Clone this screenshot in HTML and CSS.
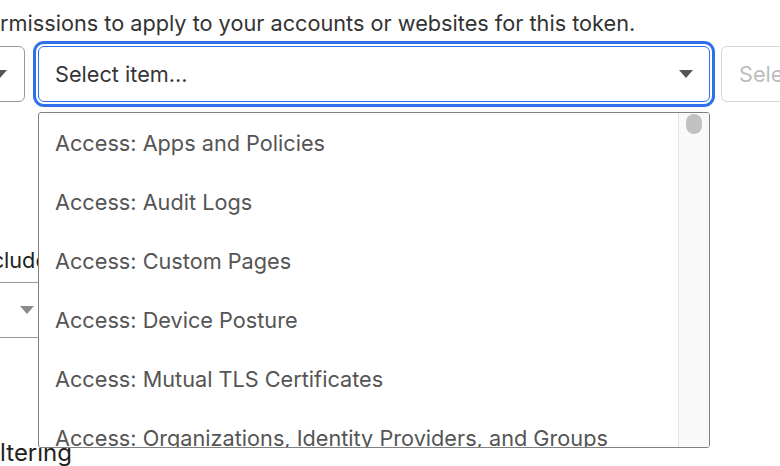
FILE: index.html
```html
<!DOCTYPE html>
<html lang="en">
<head>
<meta charset="utf-8">
<title>Permissions</title>
<link rel="stylesheet" href="styles.css">
</head>
<body>
<div class="page">
  <p class="desc">rmissions to apply to your accounts or websites for this token.</p>

  <div class="perm-row">
    <div class="select select-left">
      <span class="caret"></span>
    </div>
    <div class="combo">
      <div class="select select-main">
        <span class="value">Select item...</span>
        <span class="caret"></span>
      </div>
      <div class="menu">
        <ul class="menu-list">
          <li class="menu-item">Access: Apps and Policies</li>
          <li class="menu-item">Access: Audit Logs</li>
          <li class="menu-item">Access: Custom Pages</li>
          <li class="menu-item">Access: Device Posture</li>
          <li class="menu-item">Access: Mutual TLS Certificates</li>
          <li class="menu-item">Access: Organizations, Identity Providers, and Groups</li>
        </ul>
        <div class="scrollbar"><div class="thumb"></div></div>
      </div>
    </div>
    <div class="select select-right">
      <span class="placeholder">Select...</span>
    </div>
  </div>

  <div class="resources">
    <div class="label">Include</div>
    <div class="select select-lower">
      <span class="caret caret-light"></span>
    </div>
  </div>

  <h2 class="section-title">Client IP Address Filtering</h2>
</div>
</body>
</html>
```

FILE: styles.css
```css
* { box-sizing: border-box; }

html, body {
  margin: 0;
  padding: 0;
  background: #fff;
  overflow: hidden;
}

body {
  width: 780px;
  height: 466px;
  font-family: Inter, "Noto Sans", "Liberation Sans", sans-serif;
  color: #333;
}

.page {
  padding-top: 9px;
}

.desc {
  margin: 0;
  font-size: 21.7px;
  line-height: 28px;
  color: #333;
  white-space: nowrap;
}

.perm-row {
  display: flex;
  align-items: flex-start;
  margin-top: 9px;
}

.select {
  height: 56px;
  border: 1px solid #999;
  border-radius: 6px;
  background: #fff;
  display: flex;
  align-items: center;
  flex-shrink: 0;
}

.select-left {
  width: 150px;
  margin-left: -125px;
  justify-content: flex-end;
  padding-right: 17px;
}

.combo {
  position: relative;
  margin-left: 13px;
  flex-shrink: 0;
}

.select-main {
  width: 672px;
  border-color: #2f6feb;
  box-shadow: 0 0 0 2px #fff, 0 0 0 5px #2f6feb;
  padding: 0 16px 0 16px;
  justify-content: space-between;
}

.value {
  font-size: 21.7px;
  color: #363636;
}

.caret {
  width: 0;
  height: 0;
  border-left: 7px solid transparent;
  border-right: 7px solid transparent;
  border-top: 8px solid #555;
}

.caret-light {
  border-top-color: #8a8a8a;
}

.select-right {
  width: 200px;
  margin-left: 11px;
  border-color: #d6d6d6;
  padding-left: 17px;
}

.placeholder {
  font-size: 21.7px;
  color: #bdbdbd;
}

.menu {
  position: absolute;
  top: 66px;
  left: 0;
  width: 672px;
  height: 336px;
  border: 1px solid #808080;
  border-radius: 3px;
  background: #fff;
  overflow: hidden;
  z-index: 5;
}

.menu-list {
  list-style: none;
  margin: 0;
  padding: 0;
}

.menu-item {
  height: 59px;
  display: flex;
  align-items: center;
  padding-left: 16px;
  font-size: 21.7px;
  color: #555;
  white-space: nowrap;
}

.scrollbar {
  position: absolute;
  top: 0;
  right: 0;
  width: 31px;
  height: 100%;
  background: #f9f9f9;
  border-left: 1px solid #e6e6e6;
  padding-top: 1px;
  display: flex;
  justify-content: center;
}

.thumb {
  width: 16px;
  height: 20px;
  border-radius: 8px;
  background: #c1c1c1;
}

.resources {
  margin-top: 144px;
}

.label {
  font-size: 21.7px;
  line-height: 28px;
  color: #222;
  margin-left: -27px;
  white-space: nowrap;
}

.select-lower {
  margin-top: 8px;
  width: 300px;
  margin-left: -52px;
  border-color: #999;
  padding-left: 71px;
}

.section-title {
  margin: 0;
  margin-top: 100px;
  margin-left: -221px;
  font-size: 24px;
  font-weight: 400;
  line-height: 30px;
  color: #222;
  white-space: nowrap;
}
```
